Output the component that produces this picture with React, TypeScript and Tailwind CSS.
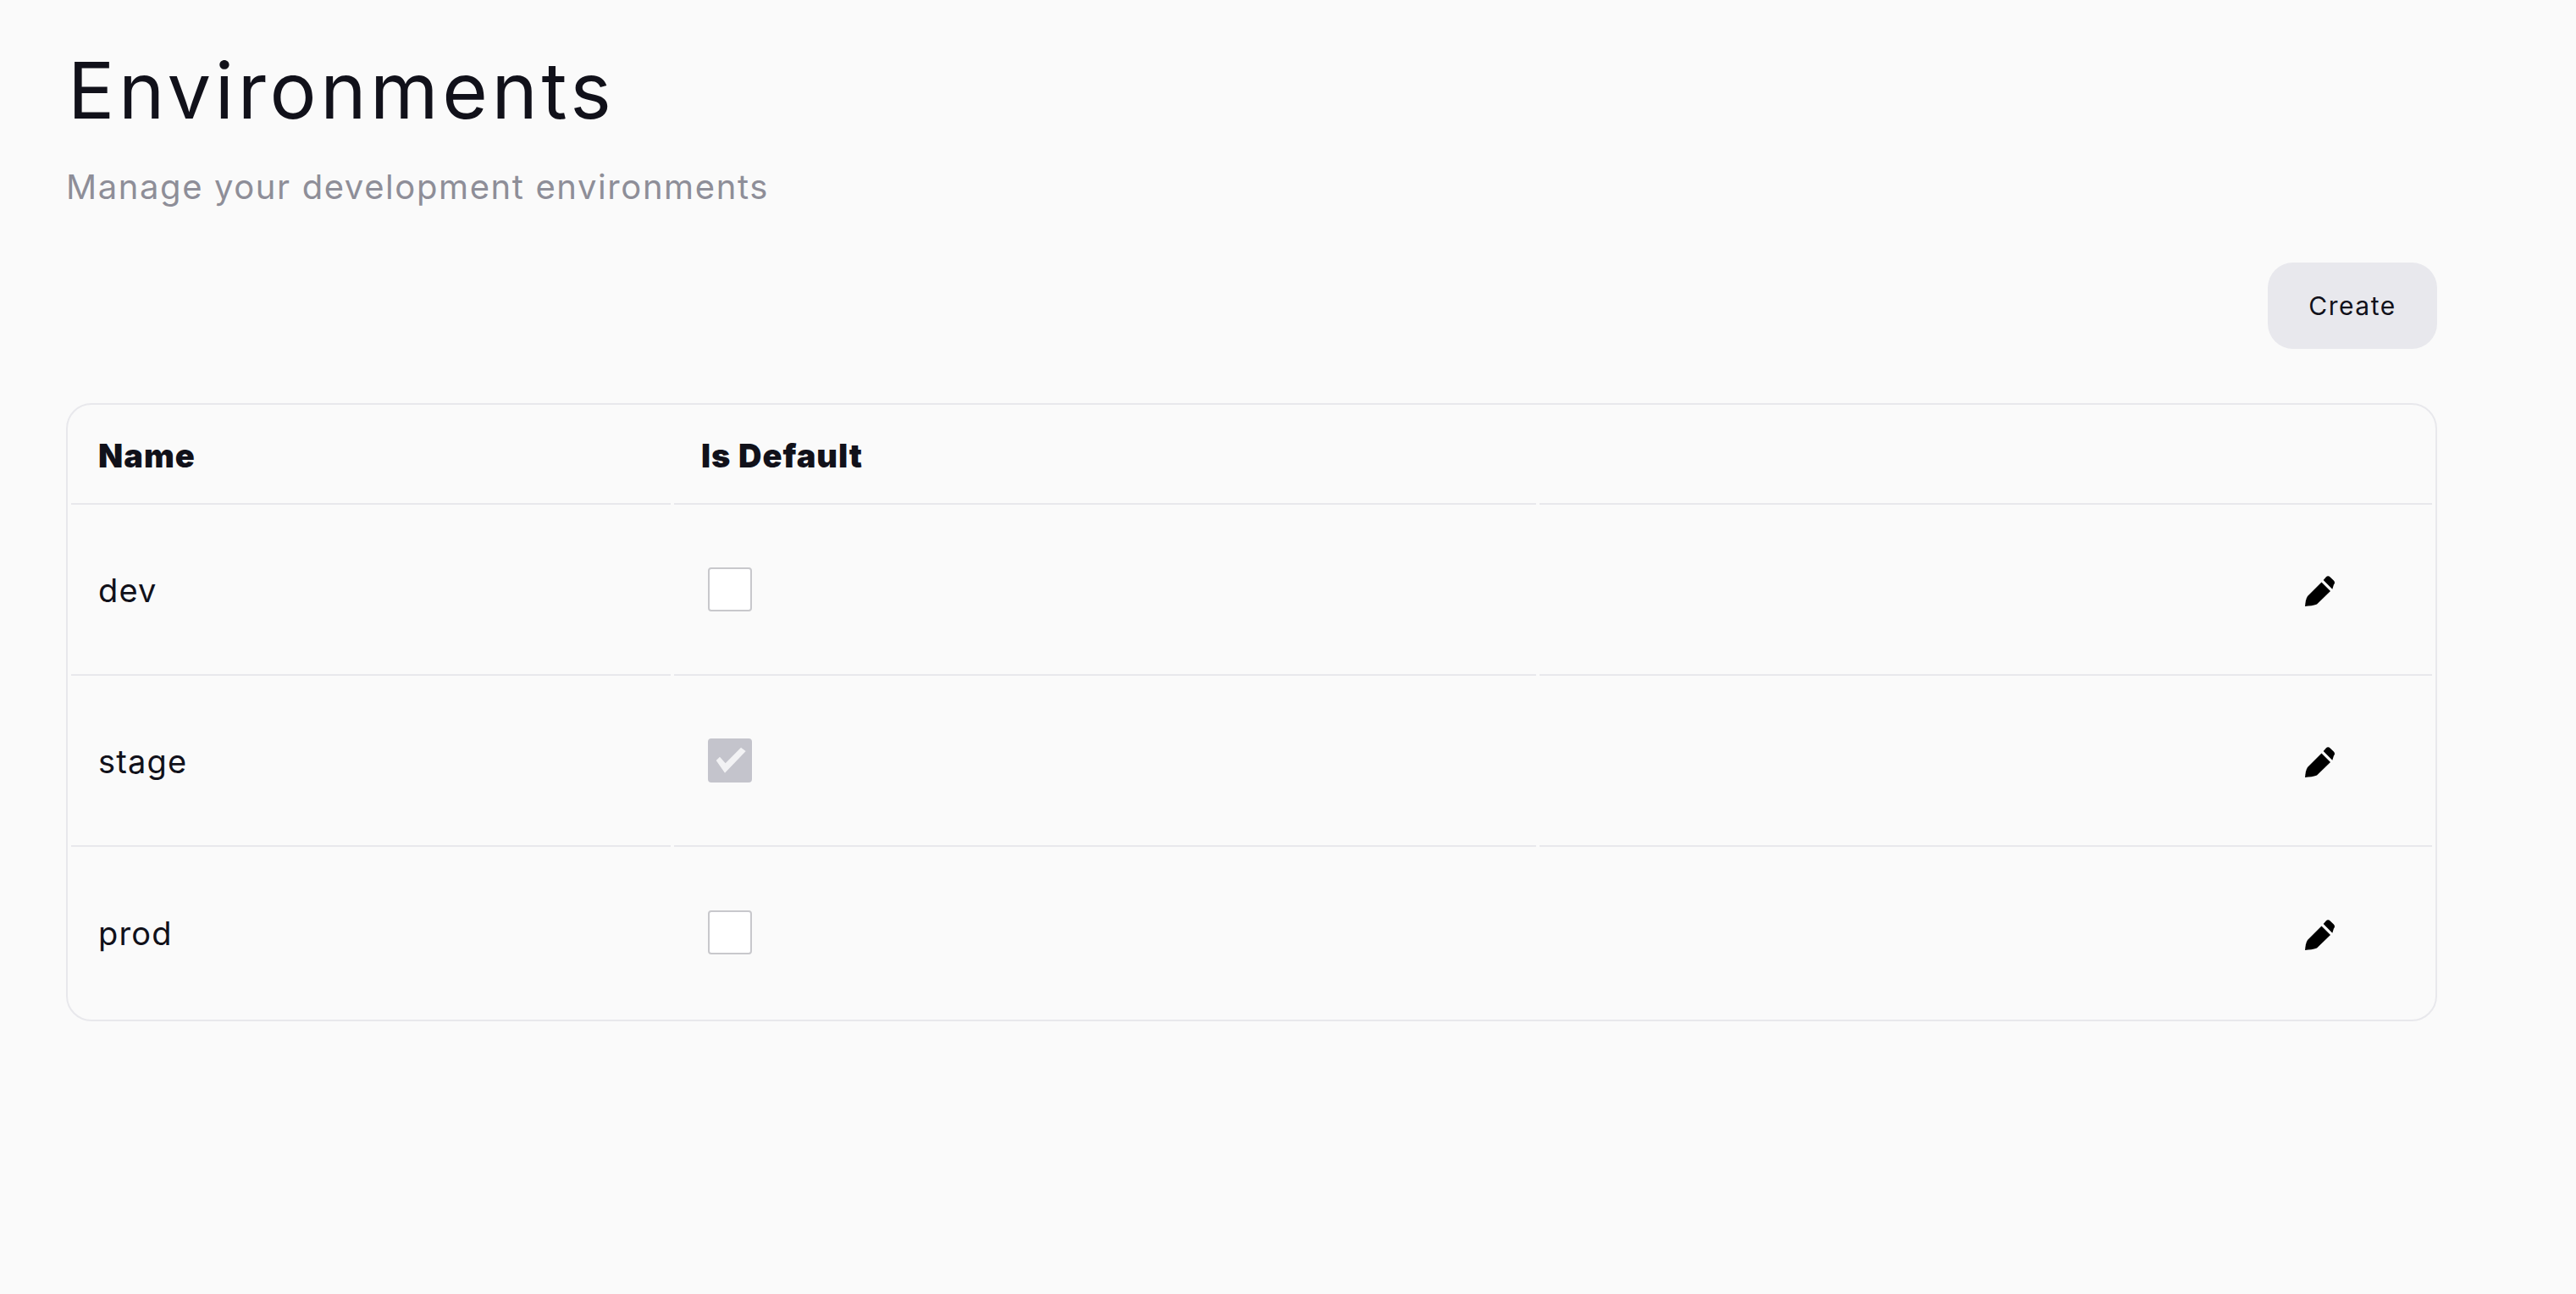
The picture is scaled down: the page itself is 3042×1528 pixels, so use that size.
export default function App() {
  const rows = [
    { name: "dev", on: false },
    { name: "stage", on: true },
    { name: "prod", on: false },
  ];
  return (
    <div className="min-h-[1528px] bg-[#fafafa] px-[78px] pt-[52px] text-[#11111a] font-['Inter',sans-serif]">
      <div className="w-[2800px]">
        <h1 className="h-[110px] pl-[2px] text-[92px] leading-[110px] font-normal tracking-[4.6px]">Environments</h1>
        <p className="mt-[34px] h-[50px] text-[40px] leading-[50px] text-[#8e8e98] tracking-[1.6px]">Manage your development environments</p>
        <div className="mt-[64px] flex justify-end">
          <button className="h-[102px] w-[200px] rounded-[30px] bg-[#e8e8ed] text-[30px] tracking-[1.5px]">Create</button>
        </div>
        <div className="mt-[64px] overflow-hidden rounded-[30px] border-2 border-[#e8e8ec]">
          <table className="w-full table-fixed border-separate border-spacing-x-1 border-spacing-y-0">
            <colgroup>
              <col className="w-[708px]" />
              <col className="w-[1018px]" />
              <col />
            </colgroup>
            <thead>
              <tr>
                <th className="h-[118px] border-b-2 border-[#e8e8ec] pl-[32px] pt-[4px] text-left text-[38px] font-black tracking-[1px]">Name</th>
                <th className="h-[118px] border-b-2 border-[#e8e8ec] pl-[32px] pt-[4px] text-left text-[38px] font-black tracking-[1px]">Is Default</th>
                <th className="h-[118px] border-b-2 border-[#e8e8ec]"></th>
              </tr>
            </thead>
            <tbody>
              {rows.map((r, i) => {
                const b = i < 2 ? "h-[202px] border-b-2 border-[#e8e8ec]" : "h-[204px]";
                const t = i < 2 ? "pt-[2px]" : "pt-0";
                const c = i < 2 ? "pb-0" : "pb-[3px]";
                return (
                  <tr key={r.name}>
                    <td className={`${b} ${t} pl-[32px] text-[38px] tracking-[1.2px]`}>{r.name}</td>
                    <td className={`${b} ${c} pl-[40px]`}>
                      {r.on ? (
                        <div className="h-[52px] w-[52px] rounded-[4px] bg-[#c4c4cc]">
                          <svg width="52" height="52" viewBox="0 0 52 52">
                            <path d="M14 21.700 20.700 29.300 39 10.700 44.700 15 20 40.700 9.700 26Z" fill="#f2f2f4" />
                          </svg>
                        </div>
                      ) : (
                        <div className="h-[52px] w-[52px] rounded-[4px] border-2 border-[#c8c8cc] bg-white" />
                      )}
                    </td>
                    <td className={`${b} pr-[114px] pt-[4px] text-right`}>
                      <svg className="inline-block" width="36" height="36" viewBox="0 0 36 36">
                        <path d="M0 36C.5 31 1 27 3 24L19.500 7.500 30 18 14 33.500C10 35 5 35.500 0 36Z" fill="#000" />
                        <path d="M21.700 5l3-3.600c1.600-1.600 3.400-1.600 5 0l4.200 4.200c1.500 1.600 1.500 3.200 0 4.800l-1.600 5.300Z" fill="#000" />
                      </svg>
                    </td>
                  </tr>
                );
              })}
            </tbody>
          </table>
        </div>
      </div>
    </div>
  );
}
